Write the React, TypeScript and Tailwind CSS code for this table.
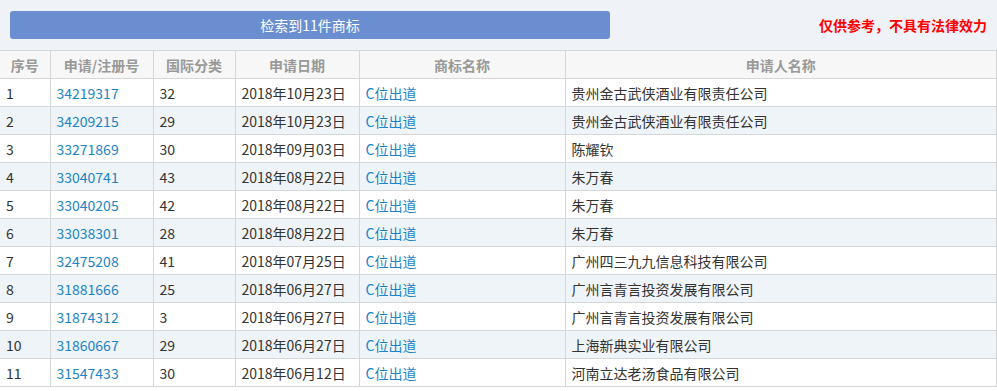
const rows = [
  ["1", "34219317", "32", "2018年10月23日", "贵州金古武侠酒业有限责任公司"],
  ["2", "34209215", "29", "2018年10月23日", "贵州金古武侠酒业有限责任公司"],
  ["3", "33271869", "30", "2018年09月03日", "陈耀钦"],
  ["4", "33040741", "43", "2018年08月22日", "朱万春"],
  ["5", "33040205", "42", "2018年08月22日", "朱万春"],
  ["6", "33038301", "28", "2018年08月22日", "朱万春"],
  ["7", "32475208", "41", "2018年07月25日", "广州四三九九信息科技有限公司"],
  ["8", "31881666", "25", "2018年06月27日", "广州言青言投资发展有限公司"],
  ["9", "31874312", "3", "2018年06月27日", "广州言青言投资发展有限公司"],
  ["10", "31860667", "29", "2018年06月27日", "上海新典实业有限公司"],
  ["11", "31547433", "30", "2018年06月12日", "河南立达老汤食品有限公司"],
];

const heads = ["序号", "申请/注册号", "国际分类", "申请日期", "商标名称", "申请人名称"];
const widths = ["w-[50px]", "w-[103px]", "w-[82px]", "w-[124px]", "w-[206px]", "w-auto"];

export default function App() {
  return (
    <div className="w-[997px] h-[391px] bg-white text-[14px] text-[#333] font-['Noto_Sans_CJK_SC','Noto_Sans',sans-serif] overflow-hidden">
      <div className="h-[50px] bg-[#eff3f7] flex items-center px-[10px]">
        <div className="w-[600px] h-[28px] rounded-[3px] bg-[#6a8ed0] text-white flex items-center justify-center">
          检索到11件商标
        </div>
        <div className="ml-auto text-[#f00] font-bold">仅供参考，不具有法律效力</div>
      </div>
      <table className="w-[997px] table-fixed border-collapse">
        <thead>
          <tr className="h-[28px] bg-[#f7f7f7]">
            {heads.map((h, i) => (
              <th
                key={h}
                className={`${widths[i]} border border-[#d6d6d6] ${i === 0 ? "border-l-0" : ""} text-[#999] font-bold text-center p-0 leading-none`}
              >
                {h}
              </th>
            ))}
          </tr>
        </thead>
        <tbody>
          {rows.map((r, idx) => (
            <tr key={r[0]} className={`h-[28px] ${idx % 2 === 1 ? "bg-[#eff4f8]" : "bg-white"}`}>
              <td className="border border-l-0 border-[#d6d6d6] px-[6px] leading-none">{r[0]}</td>
              <td className="border border-[#d6d6d6] px-[6px] leading-none text-[#1a84c6]">{r[1]}</td>
              <td className="border border-[#d6d6d6] px-[6px] leading-none">{r[2]}</td>
              <td className="border border-[#d6d6d6] px-[6px] leading-none">{r[3]}</td>
              <td className="border border-[#d6d6d6] px-[6px] leading-none text-[#1a84c6]">C位出道</td>
              <td className="border border-[#d6d6d6] px-[6px] leading-none">{r[4]}</td>
            </tr>
          ))}
        </tbody>
      </table>
    </div>
  );
}
